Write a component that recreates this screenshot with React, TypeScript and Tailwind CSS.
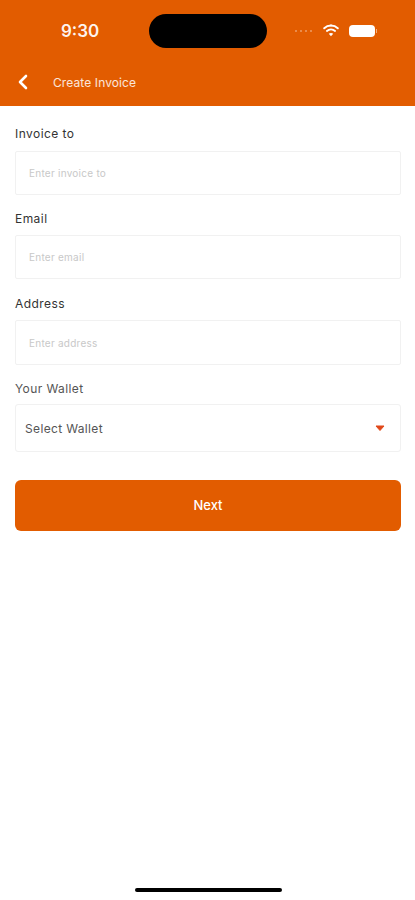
import React from 'react';
import { ChevronLeft } from 'lucide-react';

const fields = [
  { label: 'Invoice to', placeholder: 'Enter invoice to', mb: 'mb-[15px]', h: 'h-[44px]', lb: 'mb-[9px]', ph: '' },
  { label: 'Email', placeholder: 'Enter email', mb: 'mb-[16px]', h: 'h-[44px]', lb: 'pt-[1px] mb-[8px]', ph: 'pt-[1px]' },
  { label: 'Address', placeholder: 'Enter address', mb: 'mb-[15px]', h: 'h-[45px]', lb: 'pt-[1px] mb-[8px]', ph: 'pt-[1px]' },
];

const App: React.FC = () => {
  return (
    <div className="w-[415px] h-[900px] bg-white flex flex-col overflow-hidden font-['Inter',sans-serif]">
      {/* Header */}
      <div className="h-[106px] bg-[#e25c00] shrink-0 flex flex-col">
        <div className="h-[62px] pt-[14px] flex items-start">
          <span className="w-[149px] pl-[61px] pt-[6px] text-[17px] leading-[22px] font-semibold text-white/95">9:30</span>
          <div className="w-[118px] h-[34px] rounded-full bg-black" />
          <div className="flex items-center pl-[28px] pt-[11px]">
            <div className="flex gap-[3px] mr-[10px]">
              <span className="w-[2px] h-[2px] rounded-full bg-white/40" />
              <span className="w-[2px] h-[2px] rounded-full bg-white/40" />
              <span className="w-[2px] h-[2px] rounded-full bg-white/40" />
              <span className="w-[2px] h-[2px] rounded-full bg-white/40" />
            </div>
            <svg width="18" height="14" viewBox="0 0 18 14" className="mr-[9px] mt-[-3px]">
              <path d="M9 2.5c2.6 0 5 1 6.8 2.7" fill="none" stroke="#fff" strokeWidth="2" strokeLinecap="round" />
              <path d="M9 2.5c-2.6 0-5 1-6.8 2.7" fill="none" stroke="#fff" strokeWidth="2" strokeLinecap="round" />
              <path d="M4.9 8c2.3-2 5.9-2 8.2 0" fill="none" stroke="#fff" strokeWidth="1.8" strokeLinecap="round" />
              <path d="M9 13.2 6.8 10.7c1.2-1 3.2-1 4.4 0z" fill="#fff" />
            </svg>
            <div className="flex items-center">
              <div className="w-[26px] h-[12px] rounded-[4px] bg-white" />
              <div className="w-[1px] h-[4px] ml-[1px] bg-white/50" />
            </div>
          </div>
        </div>
        <div className="flex items-center h-[40px]">
          <ChevronLeft size={24} strokeWidth={2.6} className="text-white ml-[11px]" />
          <span className="ml-[18px] pt-[1px] text-[12px] text-white/85 tracking-[0.1px]">Create Invoice</span>
        </div>
      </div>

      {/* Form */}
      <div className="flex flex-col pl-[15px] pr-[14px] pt-[20px] flex-1">
        {fields.map(f => (
          <div key={f.label} className={f.mb}>
            <div className={`text-[12px] leading-[16px] text-[#333333] tracking-[0.45px] ${f.lb}`}>{f.label}</div>
            <div className={`${f.h} border border-[#f1f1f1] rounded-[2px] flex items-center pl-[13px]`}>
              <span className={`text-[10px] tracking-[0.25px] text-[#c8c8c8] ${f.ph}`}>{f.placeholder}</span>
            </div>
          </div>
        ))}

        <div className="pt-[1px] text-[12px] leading-[16px] text-[#555555] tracking-[0.4px] mb-[7px]">Your Wallet</div>
        <div className="h-[48px] border border-[#f1f1f1] rounded-[3px] flex items-center justify-between pl-[9px] pr-[15px]">
          <span className="pt-[1px] text-[12px] text-[#555555] tracking-[0.35px]">Select Wallet</span>
          <svg width="10" height="6" viewBox="0 0 10 6">
            <path d="M1 1h8L5 5.5z" fill="#e0481a" stroke="#e0481a" strokeLinejoin="round" />
          </svg>
        </div>

        <button className="mt-[28px] h-[51px] w-full bg-[#e25c00] rounded-[6px] text-white text-[13px] font-medium">Next</button>

        <div className="mt-auto mb-[8px] self-center w-[147px] h-[4px] rounded-full bg-black" />
      </div>
    </div>
  );
};

export default App;
